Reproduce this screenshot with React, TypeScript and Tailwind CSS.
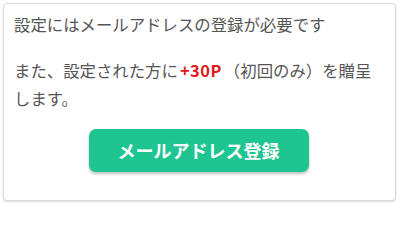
export default function App() {
  return (
    <div className="w-[400px] h-[206px] bg-white p-[3px] font-['Noto_Sans_CJK_JP','Noto_Sans',sans-serif]">
      <div className="flex h-[198px] w-[393px] flex-col rounded-[4px] border border-[#dcdcdc] bg-white pl-[10px] pr-[12px] pt-[6px] shadow-[0_1px_2px_rgba(0,0,0,0.15)]">
        <p className="text-[16.4px] leading-[28px] text-[#555]">設定にはメールアドレスの登録が必要です</p>
        <p className="mt-[18px] text-[16.4px] leading-[28px] text-[#555]">
          また、設定された方に
          <span className="mx-[2px] font-bold tracking-[0.5px] text-[#e0191e]">+30P</span>
          （初回のみ）を贈呈します。
        </p>
        <div className="mt-[17px] flex justify-center">
          <button className="h-[43px] w-[220px] rounded-[7px] bg-[#1ec590] text-[18px] font-bold text-white shadow-[0_2px_3px_rgba(0,0,0,0.25)]">
            メールアドレス登録
          </button>
        </div>
      </div>
    </div>
  );
}
